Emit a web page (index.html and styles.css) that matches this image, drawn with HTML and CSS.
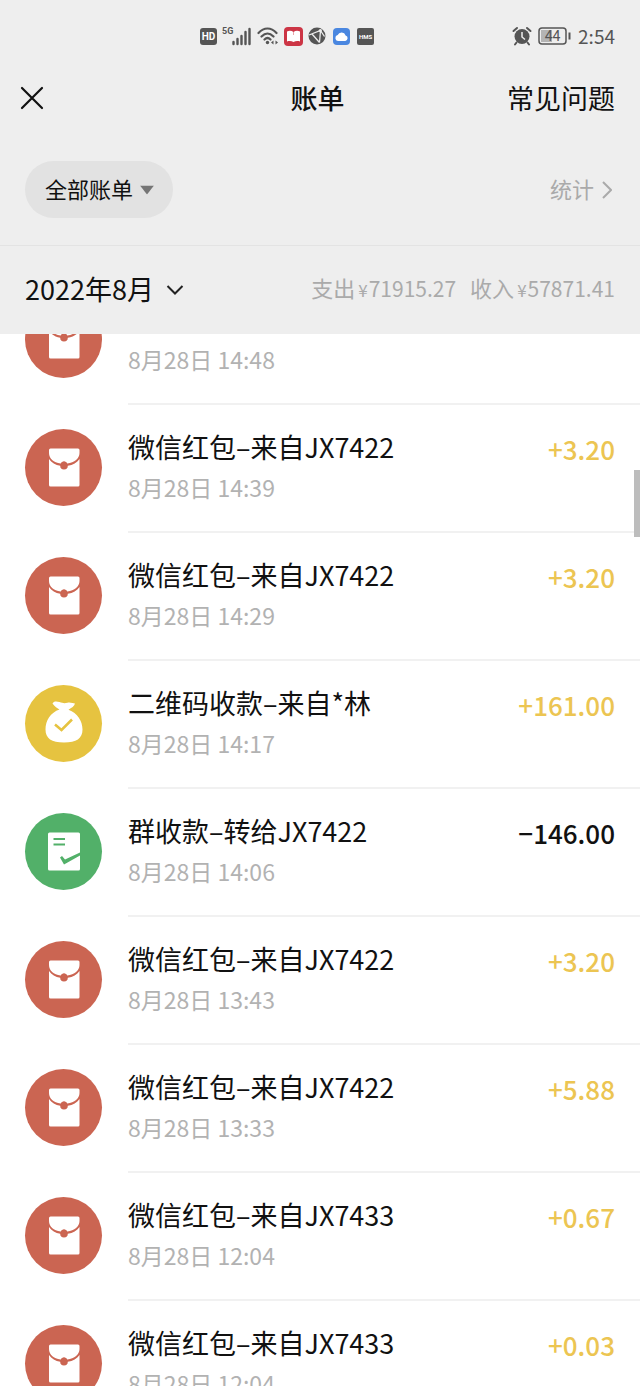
FILE: index.html
```html
<!DOCTYPE html>
<html lang="zh-CN">
<head>
    <meta charset="UTF-8">
    <meta name="viewport" content="width=device-width, initial-scale=1.0">
    <title>账单</title>
    <link rel="stylesheet" href="styles.css">
</head>
<body>
    <svg class="sprite" aria-hidden="true">
        <symbol id="icon-packet" viewBox="0 0 77 77">
            <path d="M24 30V56a1.500 1.500 0 0 0 1.500 1.500H53a1.500 1.500 0 0 0 1.500-1.500V30C52 33.500 48 36 42.800 36.800a3.800 3.800 0 0 1-7.600 0C30.500 36 26.500 33.500 24 30z" fill="#fff"/>
            <path d="M24 21a1.500 1.500 0 0 1 1.500-1.500H53a1.500 1.500 0 0 1 1.500 1.500v3c0 5.500-5 9.500-12.200 10.500a3.800 3.800 0 0 0-6.600 0C28.500 33.500 24 29.500 24 24z" fill="#fff"/>
            <circle cx="39" cy="35.500" r="2.900" fill="#cb6552"/>
        </symbol>
        <symbol id="icon-bag" viewBox="0 0 77 77">
            <path d="M27.500 18.500c1-2.500 4-2.500 7-1.500 3 1.200 5 1.500 8 .8 3-.8 6.500 1 7.500.7-.5 2.500-3.500 4.500-6.500 6.200C52.500 28 57.500 36 57.500 44.500c0 9-6 13-18.500 13s-18.500-4-18.500-13c0-9 5-17 14-20-2-1-5-3-7-6z" fill="#fff"/>
            <path d="M30 39.500l6.500 5.500L47 34.500" fill="none" stroke="#e6c340" stroke-width="2.500"/>
        </symbol>
        <symbol id="icon-group" viewBox="0 0 77 77">
            <rect x="23" y="19.500" width="32" height="38" rx="1.500" fill="#fff"/>
            <path d="M28.500 26H40M28.500 31.500H40" stroke="#52b069" stroke-width="2"/>
            <path d="M35 44.500l2-1.500 3 3.500L55 39.500V42.500L39 51.500z" fill="#52b069"/>
        </symbol>
    </svg>

    <div class="screen">
        <div class="status-bar">
            <div class="status-left">
                <svg width="17" height="17" viewBox="0 0 17 17">
                    <rect width="17" height="17" rx="3" fill="#555"/>
                    <text x="8.500" y="12" class="hd-text">HD</text>
                </svg>
                <svg width="30" height="22" viewBox="0 0 30 22">
                    <text x="0" y="9" class="net-text">5G</text>
                    <path d="M11.500 19v-2M15.500 19v-5M19.500 19v-8M23.500 19V7M27.500 19V4" stroke="#555" stroke-width="2.400" stroke-linecap="round"/>
                </svg>
                <svg width="22" height="20" viewBox="0 0 22 20">
                    <path d="M1.500 7C7 1 14 1 19.500 7M4.500 10.500c4-4 8-4 12 0M7.500 13.500c2-2 4-2 6 0" fill="none" stroke="#555" stroke-width="2.200" stroke-linecap="round"/>
                    <circle cx="10.500" cy="16.500" r="1.700" fill="#555"/>
                    <path d="M16.500 14.500v4l-2.500-2zM18.500 14.500v4l2.500-2z" fill="#555"/>
                </svg>
                <svg width="19" height="19" viewBox="0 0 19 19">
                    <rect width="19" height="19" rx="4" fill="#cc3545"/>
                    <path d="M3 4.500c2-1 4.500-1 6.500.5 2-1.500 4.500-1.500 6.500-.5v10c-2-.6-4.500-.6-6.500.5-2-1.100-4.500-1.100-6.500-.5z" fill="#fff"/>
                    <path d="M9.500 5v3" stroke="#e9a5ab"/>
                </svg>
                <svg width="18" height="18" viewBox="0 0 18 18">
                    <circle cx="9" cy="9" r="8.500" fill="#555"/>
                    <path d="M1 8L12.500 3.500l-1 12M4 7l7.500 8.500M12.500 3.500l4 6" fill="none" stroke="#eee" stroke-width="1.300"/>
                    <circle cx="12.300" cy="3.500" r="1.600" fill="#eee"/>
                </svg>
                <svg width="17" height="17" viewBox="0 0 17 17">
                    <rect width="17" height="17" rx="4" fill="#4a87e0"/>
                    <path d="M5 13a3 3 0 0 1-.3-5.900 4.200 4.200 0 0 1 7.900.3A2.900 2.900 0 0 1 12.300 13z" fill="#fff"/>
                </svg>
                <svg width="17" height="17" viewBox="0 0 17 17">
                    <rect width="17" height="17" rx="2" fill="#555"/>
                    <text x="8.500" y="10.500" class="hms-text">HMS</text>
                </svg>
            </div>
            <div class="status-right">
                <svg width="20" height="20" viewBox="0 0 20 20">
                    <circle cx="10" cy="10.500" r="7.500" fill="#555"/>
                    <path d="M1.500 5L5 2M18.500 5L15 2M4.500 16.500L3 18.500M15.500 16.500l1.500 2" stroke="#555" stroke-width="2" stroke-linecap="round"/>
                    <path d="M10 6v5l3 2.500" fill="none" stroke="#eee" stroke-width="1.500"/>
                </svg>
                <svg width="34" height="18" viewBox="0 0 34 18">
                    <rect x="1" y="1" width="27" height="16" rx="3" fill="none" stroke="#555" stroke-width="1.500"/>
                    <rect x="3" y="3" width="11" height="12" fill="#b4b4b4"/>
                    <path d="M31.500 5.500v7" stroke="#555" stroke-width="2"/>
                    <text x="14.500" y="14" class="battery-text">44</text>
                </svg>
                <span class="clock">2:54</span>
            </div>
        </div>

        <header class="nav">
            <button type="button" class="close-btn" aria-label="关闭">
                <svg width="24" height="24" viewBox="0 0 24 24">
                    <path d="M2 2l20 20M22 2L2 22" stroke="#111" stroke-width="2.200" stroke-linecap="round"/>
                </svg>
            </button>
            <h1>账单</h1>
            <a href="#" class="help-link">常见问题</a>
        </header>

        <div class="filter">
            <div class="picker pill">
                <select aria-label="账单类型">
                    <option>全部账单</option>
                </select>
                <svg width="14" height="9" viewBox="0 0 14 9">
                    <path d="M0 0h14L7 9z" fill="#757575"/>
                </svg>
            </div>
            <a href="#" class="stats-link">
                <span>统计</span>
                <svg width="10" height="18" viewBox="0 0 10 18">
                    <path d="M1 1l8 8-8 8" fill="none" stroke="#aaa" stroke-width="2"/>
                </svg>
            </a>
        </div>

        <div class="month">
            <div class="picker month-picker">
                <select aria-label="月份">
                    <option>2022年8月</option>
                </select>
                <svg width="18" height="11" viewBox="0 0 18 11">
                    <path d="M1.500 1.500L9 9l7.500-7.500" fill="none" stroke="#222" stroke-width="2"/>
                </svg>
            </div>
            <div class="totals">
                <p class="total"><span>支出</span><span class="yen">¥</span><span class="num">71915.27</span></p>
                <p class="total"><span>收入</span><span class="yen">¥</span><span class="num">57871.41</span></p>
            </div>
        </div>

        <main class="list-view">
            <ul class="list">
                <li class="item">
                    <svg class="avatar red"><use href="#icon-packet"/></svg>
                    <div class="detail">
                        <div class="text"><p class="name">微信红包–来自JX7422</p><p class="time">8月28日 14:48</p></div>
                        <span class="amount income">+3.20</span>
                    </div>
                </li>
                <li class="item">
                    <svg class="avatar red"><use href="#icon-packet"/></svg>
                    <div class="detail">
                        <div class="text"><p class="name">微信红包–来自JX7422</p><p class="time">8月28日 14:39</p></div>
                        <span class="amount income">+3.20</span>
                    </div>
                </li>
                <li class="item">
                    <svg class="avatar red"><use href="#icon-packet"/></svg>
                    <div class="detail">
                        <div class="text"><p class="name">微信红包–来自JX7422</p><p class="time">8月28日 14:29</p></div>
                        <span class="amount income">+3.20</span>
                    </div>
                </li>
                <li class="item">
                    <svg class="avatar yellow"><use href="#icon-bag"/></svg>
                    <div class="detail">
                        <div class="text"><p class="name">二维码收款–来自*林</p><p class="time">8月28日 14:17</p></div>
                        <span class="amount income">+161.00</span>
                    </div>
                </li>
                <li class="item">
                    <svg class="avatar green"><use href="#icon-group"/></svg>
                    <div class="detail">
                        <div class="text"><p class="name">群收款–转给JX7422</p><p class="time">8月28日 14:06</p></div>
                        <span class="amount">−146.00</span>
                    </div>
                </li>
                <li class="item">
                    <svg class="avatar red"><use href="#icon-packet"/></svg>
                    <div class="detail">
                        <div class="text"><p class="name">微信红包–来自JX7422</p><p class="time">8月28日 13:43</p></div>
                        <span class="amount income">+3.20</span>
                    </div>
                </li>
                <li class="item">
                    <svg class="avatar red"><use href="#icon-packet"/></svg>
                    <div class="detail">
                        <div class="text"><p class="name">微信红包–来自JX7422</p><p class="time">8月28日 13:33</p></div>
                        <span class="amount income">+5.88</span>
                    </div>
                </li>
                <li class="item">
                    <svg class="avatar red"><use href="#icon-packet"/></svg>
                    <div class="detail">
                        <div class="text"><p class="name">微信红包–来自JX7433</p><p class="time">8月28日 12:04</p></div>
                        <span class="amount income">+0.67</span>
                    </div>
                </li>
                <li class="item">
                    <svg class="avatar red"><use href="#icon-packet"/></svg>
                    <div class="detail">
                        <div class="text"><p class="name">微信红包–来自JX7433</p><p class="time">8月28日 12:04</p></div>
                        <span class="amount income">+0.03</span>
                    </div>
                </li>
            </ul>
            <div class="scroll-thumb"></div>
        </main>
    </div>
</body>
</html>
```
FILE: styles.css
```css
* {
    box-sizing: border-box;
}

body {
    margin: 0;
    font-family: "Noto Sans CJK SC", sans-serif;
    color: #111;
    background-color: #eee;
}

h1, p, ul {
    margin: 0;
    padding: 0;
}

a {
    color: inherit;
    text-decoration: none;
}

button, select {
    font: inherit;
    color: inherit;
    background: none;
    border: none;
    padding: 0;
    cursor: pointer;
}

svg {
    display: block;
    flex-shrink: 0;
}

.sprite {
    display: none;
}

.screen {
    display: flex;
    flex-direction: column;
    height: 100vh;
    overflow: hidden;
}

/* status bar */
.status-bar {
    display: flex;
    justify-content: space-between;
    align-items: center;
    height: 72px;
    padding: 0 25px 0 200px;
    color: #555;
}

.status-left {
    display: flex;
    align-items: center;
    gap: 5px;
}

.status-left svg:nth-child(n+6) {
    margin-left: 2px;
}

.status-right {
    display: flex;
    align-items: center;
    gap: 6px;
}

.clock {
    font-size: 19px;
    line-height: 24px;
}

.hd-text, .net-text, .hms-text, .battery-text {
    font-family: Roboto, sans-serif;
    font-weight: bold;
    text-anchor: middle;
    fill: #fff;
}

.hd-text {
    font-size: 10px;
}

.net-text {
    font-size: 9px;
    text-anchor: start;
    fill: #555;
}

.hms-text {
    font-size: 6px;
}

.battery-text {
    font-size: 14px;
    font-weight: normal;
    fill: #555;
}

/* title row */
.nav {
    display: grid;
    grid-template-columns: 1fr auto 1fr;
    align-items: center;
    height: 52px;
    padding: 0 25px 0 20px;
    font-size: 27px;
    line-height: 40px;
}

.nav h1 {
    font-size: 27px;
    font-weight: 500;
}

.close-btn, .help-link {
    justify-self: start;
}

.help-link {
    justify-self: end;
}

/* filter row */
.filter {
    display: flex;
    justify-content: space-between;
    align-items: center;
    height: 122px;
    padding: 10px 28px 0 25px;
    border-bottom: 1px solid #e3e3e3;
    font-size: 22px;
    line-height: 32px;
}

.picker {
    position: relative;
}

.picker select {
    display: block;
    appearance: none;
}

.picker svg {
    position: absolute;
    top: 50%;
    transform: translateY(-50%);
    pointer-events: none;
}

.pill select {
    height: 57px;
    padding: 0 39px 4px 20px;
    border-radius: 29px;
    background-color: #e2e2e2;
}

.pill svg {
    right: 19px;
}

.stats-link {
    display: flex;
    align-items: center;
    gap: 8px;
    color: #aaa;
}

.stats-link span {
    padding-bottom: 4px;
}

/* month row */
.month {
    display: flex;
    justify-content: space-between;
    align-items: center;
    height: 88px;
    padding: 0 25px;
}

.month-picker select {
    height: 56px;
    padding: 0 30px 4px 0;
    font-size: 27px;
}

.month-picker svg {
    right: 0;
}

.totals {
    display: flex;
    gap: 14px;
    padding-bottom: 4px;
    font-size: 22px;
    line-height: 32px;
    color: #aaa;
}

.total {
    display: flex;
    align-items: baseline;
}

.yen {
    padding: 0 1px 0 3px;
    font-size: 17px;
}

.num {
    font-size: 21px;
}

/* bill list */
.list-view {
    position: relative;
    flex: 1;
    min-height: 0;
    overflow: hidden;
    background-color: #fff;
}

/* scrolled part way into the first row */
.list {
    margin-top: -57px;
    list-style: none;
}

.item {
    display: flex;
    gap: 26px;
    height: 128px;
    padding-left: 25px;
}

.avatar {
    width: 77px;
    height: 77px;
    margin-top: 24px;
    border-radius: 50%;
}

.red {
    background-color: #cb6552;
}

.yellow {
    background-color: #e6c340;
}

.green {
    background-color: #52b069;
}

.detail {
    display: flex;
    flex: 1;
    justify-content: space-between;
    padding: 22px 25px 0 0;
    border-bottom: 2px solid #f1f1f1;
}

.name, .amount {
    font-size: 27px;
    line-height: 40px;
}

.time {
    font-size: 23px;
    line-height: 40px;
    color: #b2b2b2;
}

.amount {
    padding-top: 2px;
    font-size: 26px;
    font-weight: 500;
}

.income {
    color: #ecc552;
}

.scroll-thumb {
    position: absolute;
    top: 136px;
    right: 0;
    width: 6px;
    height: 67px;
    background-color: #bdbdbd;
}
```
